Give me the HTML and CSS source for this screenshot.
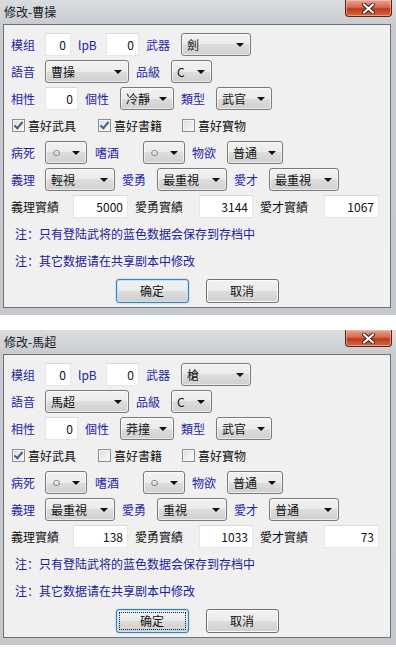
FILE: index.html
```html
<!DOCTYPE html>
<html lang="zh">
<head>
    <meta charset="UTF-8">
    <meta name="viewport" content="width=device-width, initial-scale=1.0">
    <title>修改</title>
    <link rel="stylesheet" href="styles.css">
</head>
<body>
    <!-- 修改-曹操 -->
    <div class="window">
        <div class="titlebar">
            <span class="title">修改-曹操</span>
            <span class="close-btn">
                <svg width="13" height="11" viewBox="0 0 13 11"><path d="M2 1.5 L11 9.5 M11 1.5 L2 9.5" stroke="#3b1a14" stroke-width="4" stroke-linecap="round"/><path d="M2 1.5 L11 9.5 M11 1.5 L2 9.5" stroke="#fff" stroke-width="2.2" stroke-linecap="round"/></svg>
            </span>
        </div>
        <div class="client">
            <div class="row">
                <span class="lbl">模组</span>
                <span class="edit w26">0</span>
                <span class="lbl mid lpb">lpB</span>
                <span class="edit w33">0</span>
                <span class="lbl mid">武器</span>
                <span class="combo w70"><span>劍</span><i class="arrow"></i></span>
            </div>
            <div class="row">
                <span class="lbl">語音</span>
                <span class="combo w84"><span>曹操</span><i class="arrow"></i></span>
                <span class="lbl mid">品級</span>
                <span class="combo w41"><span>C</span><i class="arrow"></i></span>
            </div>
            <div class="row">
                <span class="lbl">相性</span>
                <span class="edit w33">0</span>
                <span class="lbl mid">個性</span>
                <span class="combo w54"><span>冷靜</span><i class="arrow"></i></span>
                <span class="lbl mid">類型</span>
                <span class="combo w56"><span>武官</span><i class="arrow"></i></span>
            </div>
            <div class="row">
                <label class="chk"><span class="box checked"></span>喜好武具</label>
                <label class="chk"><span class="box checked"></span>喜好書籍</label>
                <label class="chk"><span class="box"></span>喜好寶物</label>
            </div>
            <div class="row">
                <span class="lbl">病死</span>
                <span class="combo w42"><span class="dot">○</span><i class="arrow"></i></span>
                <span class="lbl mid wide">嗜酒</span>
                <span class="combo w42"><span class="dot">○</span><i class="arrow"></i></span>
                <span class="lbl mid">物欲</span>
                <span class="combo w56"><span>普通</span><i class="arrow"></i></span>
            </div>
            <div class="row">
                <span class="lbl">義理</span>
                <span class="combo w70"><span>輕視</span><i class="arrow"></i></span>
                <span class="lbl mid">愛勇</span>
                <span class="combo w70"><span>最重視</span><i class="arrow"></i></span>
                <span class="lbl mid">愛才</span>
                <span class="combo w70"><span>最重視</span><i class="arrow"></i></span>
            </div>
            <div class="row">
                <span class="lbl long first">義理實績</span>
                <span class="edit w55">5000</span>
                <span class="lbl long">愛勇實績</span>
                <span class="edit w54">3144</span>
                <span class="lbl long">愛才實績</span>
                <span class="edit w55">1067</span>
            </div>
            <div class="row note">注：只有登陆武将的蓝色数据会保存到存档中</div>
            <div class="row note">注：其它数据请在共享剧本中修改</div>
            <div class="buttons">
                <button class="btn default">确定</button>
                <button class="btn">取消</button>
            </div>
        </div>
    </div>

    <!-- 修改-馬超 -->
    <div class="window second">
        <div class="titlebar">
            <span class="title">修改-馬超</span>
            <span class="close-btn">
                <svg width="13" height="11" viewBox="0 0 13 11"><path d="M2 1.5 L11 9.5 M11 1.5 L2 9.5" stroke="#3b1a14" stroke-width="4" stroke-linecap="round"/><path d="M2 1.5 L11 9.5 M11 1.5 L2 9.5" stroke="#fff" stroke-width="2.2" stroke-linecap="round"/></svg>
            </span>
        </div>
        <div class="client">
            <div class="row">
                <span class="lbl">模组</span>
                <span class="edit w26">0</span>
                <span class="lbl mid lpb">lpB</span>
                <span class="edit w33">0</span>
                <span class="lbl mid">武器</span>
                <span class="combo w70"><span>槍</span><i class="arrow"></i></span>
            </div>
            <div class="row">
                <span class="lbl">語音</span>
                <span class="combo w84"><span>馬超</span><i class="arrow"></i></span>
                <span class="lbl mid">品級</span>
                <span class="combo w41"><span>C</span><i class="arrow"></i></span>
            </div>
            <div class="row">
                <span class="lbl">相性</span>
                <span class="edit w33">0</span>
                <span class="lbl mid">個性</span>
                <span class="combo w54"><span>莽撞</span><i class="arrow"></i></span>
                <span class="lbl mid">類型</span>
                <span class="combo w56"><span>武官</span><i class="arrow"></i></span>
            </div>
            <div class="row">
                <label class="chk"><span class="box checked"></span>喜好武具</label>
                <label class="chk"><span class="box"></span>喜好書籍</label>
                <label class="chk"><span class="box"></span>喜好寶物</label>
            </div>
            <div class="row">
                <span class="lbl">病死</span>
                <span class="combo w42"><span class="dot">○</span><i class="arrow"></i></span>
                <span class="lbl mid wide">嗜酒</span>
                <span class="combo w42"><span class="dot">○</span><i class="arrow"></i></span>
                <span class="lbl mid">物欲</span>
                <span class="combo w56"><span>普通</span><i class="arrow"></i></span>
            </div>
            <div class="row">
                <span class="lbl">義理</span>
                <span class="combo w70"><span>最重視</span><i class="arrow"></i></span>
                <span class="lbl mid">愛勇</span>
                <span class="combo w70"><span>重視</span><i class="arrow"></i></span>
                <span class="lbl mid">愛才</span>
                <span class="combo w70"><span>普通</span><i class="arrow"></i></span>
            </div>
            <div class="row">
                <span class="lbl long first">義理實績</span>
                <span class="edit w55">138</span>
                <span class="lbl long">愛勇實績</span>
                <span class="edit w54">1033</span>
                <span class="lbl long">愛才實績</span>
                <span class="edit w55">73</span>
            </div>
            <div class="row note">注：只有登陆武将的蓝色数据会保存到存档中</div>
            <div class="row note">注：其它数据请在共享剧本中修改</div>
            <div class="buttons">
                <button class="btn default focused">确定</button>
                <button class="btn">取消</button>
            </div>
        </div>
    </div>
</body>
</html>
```

FILE: styles.css
```css
body {
    margin: 0;
    background: #fff;
    font-family: "Noto Sans CJK TC", "Noto Sans CJK SC", sans-serif;
    font-size: 12px;
    line-height: 14px;
    color: #111;
}

.window {
    width: 388px;
    padding: 0 5px 7px 3px;
    background: linear-gradient(#dadde0, #c8ccd0 24px, #c5c9cd);
}

.window.second {
    margin-top: 15px;
}

.titlebar {
    display: flex;
    align-items: center;
    height: 24px;
}

.title {
    padding-left: 1px;
    color: #1a1a1a;
}

.close-btn {
    align-self: flex-start;
    margin-left: auto;
    margin-right: -1px;
    width: 45px;
    height: 16px;
    display: flex;
    align-items: center;
    justify-content: center;
    border: 1px solid #5a2118;
    border-top: none;
    border-radius: 0 0 4px 4px;
    background: linear-gradient(#e8a493, #d46a52 45%, #c0391f 55%, #d26a45);
    box-shadow: inset 0 0 0 1px rgba(255, 210, 190, 0.5);
}

.client {
    background: #f0f0f0;
    border: 1px solid #6f7173;
    padding: 6px 0 4px 7px;
}

.row {
    display: flex;
    align-items: center;
    height: 27px;
}

.lbl {
    flex-shrink: 0;
    width: 34px;
    color: #2424a8;
}

.lbl.mid {
    margin-left: 7px;
    width: 35px;
}

.lbl.lpb {
    width: 28px;
}

.lbl.wide {
    margin-left: 8px;
    width: 48px;
}

.lbl.long {
    margin-left: 7px;
    width: 64px;
    color: #111;
}

.lbl.long.first {
    margin-left: 0;
    width: 62px;
}

.edit {
    box-sizing: border-box;
    height: 23px;
    line-height: 21px;
    padding-right: 4px;
    text-align: right;
    background: #fff;
    border: 1px solid #e4e6ea;
    border-top-color: #d8dadf;
}

.combo {
    box-sizing: border-box;
    display: flex;
    align-items: center;
    justify-content: space-between;
    height: 23px;
    padding: 0 5px 0 5px;
    border: 1px solid #7a7a7a;
    border-radius: 3px;
    background: linear-gradient(#f2f2f2, #ebebeb 50%, #dddddd 50%, #cfcfcf);
    box-shadow: inset 0 0 0 1px rgba(255, 255, 255, 0.6);
    color: #111;
}

.combo .dot {
    padding-left: 2px;
    font-family: "DejaVu Sans", sans-serif;
    font-size: 8px;
}

.arrow {
    width: 0;
    height: 0;
    margin-right: 1px;
    border-left: 4px solid transparent;
    border-right: 4px solid transparent;
    border-top: 4px solid #111;
}

.w26 { width: 26px; }
.w33 { width: 33px; }
.w41 { width: 41px; }
.w42 { width: 42px; }
.w54 { width: 54px; }
.w55 { width: 55px; }
.w56 { width: 56px; }
.w70 { width: 70px; }
.w84 { width: 84px; }

.chk {
    display: flex;
    align-items: center;
    width: 85px;
    padding-left: 1px;
}

.chk:nth-child(2) {
    width: 83px;
}

.box {
    box-sizing: border-box;
    width: 13px;
    height: 13px;
    margin-right: 3px;
    border: 1px solid #8e8f8f;
    background: linear-gradient(135deg, #dcdcdc, #fbfbfb);
    box-shadow: inset 0 0 0 1px #f4f4f4;
    position: relative;
}

.box.checked::after {
    content: "";
    position: absolute;
    left: 3px;
    top: 0;
    width: 3px;
    height: 7px;
    border: solid #4a5a88;
    border-width: 0 2px 2px 0;
    transform: rotate(40deg);
}

.note {
    padding-left: 4px;
    color: #20209a;
}

.buttons {
    display: flex;
    justify-content: center;
    gap: 17px;
    margin: 5px 0 0 -7px;
}

.btn {
    width: 73px;
    height: 24px;
    padding: 0;
    font: inherit;
    color: #111;
    border: 1px solid #707070;
    border-radius: 3px;
    background: linear-gradient(#f2f2f2, #ebebeb 50%, #dddddd 50%, #cfcfcf);
    box-shadow: inset 0 0 0 1px #fcfcfc;
}

.btn.default {
    border-color: #3c7fb1;
    box-shadow: inset 0 0 0 1px #bfe3f7, 0 0 2px #8fc8ec;
}

.btn.focused {
    outline: 1px dotted #222;
    outline-offset: -4px;
}
```
